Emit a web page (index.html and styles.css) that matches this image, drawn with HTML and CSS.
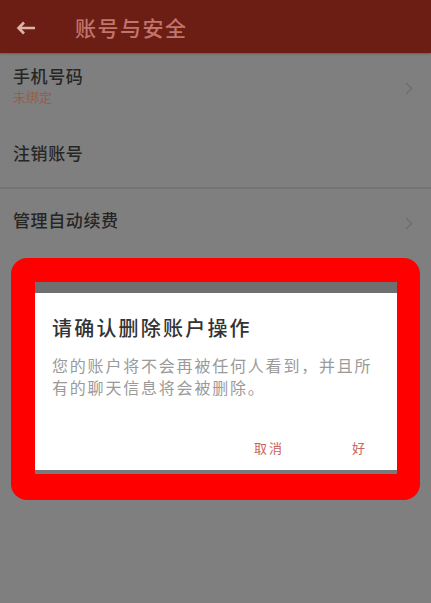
FILE: index.html
```html
<!DOCTYPE html>
<html lang="zh-CN">
<head>
    <meta charset="UTF-8">
    <meta name="viewport" content="width=device-width, initial-scale=1.0">
    <title>账号与安全</title>
    <link rel="stylesheet" href="styles.css">
</head>
<body>
    <div class="screen">
        <div class="topbar">
            <svg class="back" width="20" height="14" viewBox="0 0 20 14">
                <path d="M19 7H3M8 1.5L2.5 7 8 12.5" fill="none" stroke="#dcb2aa" stroke-width="2.6"/>
            </svg>
            <span class="topbar-title">账号与安全</span>
        </div>

        <div class="list">
            <div class="row row-phone">
                <div class="row-text">
                    <div class="row-label">手机号码</div>
                    <div class="row-sub">未绑定</div>
                </div>
                <svg class="chev" width="8" height="13" viewBox="0 0 8 13">
                    <path d="M1 1l5.5 5.5L1 12" fill="none" stroke="#6c6c6c" stroke-width="1.4"/>
                </svg>
            </div>
            <div class="row row-cancel">
                <div class="row-label">注销账号</div>
            </div>
            <div class="row row-renew">
                <div class="row-label">管理自动续费</div>
                <svg class="chev" width="8" height="13" viewBox="0 0 8 13">
                    <path d="M1 1l5.5 5.5L1 12" fill="none" stroke="#6c6c6c" stroke-width="1.4"/>
                </svg>
            </div>
        </div>

        <!-- 确认弹窗 + 红色标注框 -->
        <div class="mark">
            <div class="dialog">
                <div class="dialog-title">请确认删除账户操作</div>
                <div class="dialog-text">您的账户将不会再被任何人看到，并且所有的聊天信息将会被删除。</div>
                <div class="dialog-actions">
                    <span class="action">取消</span>
                    <span class="action">好</span>
                </div>
            </div>
        </div>
    </div>
</body>
</html>
```

FILE: styles.css
```css
html, body {
    margin: 0;
    padding: 0;
}

body {
    font-family: "Noto Sans CJK SC", "Noto Sans", sans-serif;
    background: #7f7f7f;
}

.screen {
    position: relative;
    width: 431px;
    height: 603px;
    overflow: hidden;
    background: #7f7f7f;
}

.topbar {
    height: 53px;
    background: #6d1e14;
    display: flex;
    align-items: center;
    box-shadow: 0 1px 2px rgba(0,0,0,0.25);
}

.back {
    margin-left: 16px;
    margin-top: 2px;
}

.topbar-title {
    margin-left: 39px;
    font-size: 21px;
    font-weight: 500;
    letter-spacing: 1.5px;
    color: #c0756d;
}

.row {
    display: flex;
    align-items: center;
    justify-content: space-between;
    padding: 0 18px 0 13px;
}

.row-phone {
    height: 65px;
}

.row-cancel {
    height: 69px;
    border-bottom: 2px solid #747474;
}

.row-renew {
    height: 62px;
}

.row-label {
    font-size: 17px;
    line-height: 22px;
    letter-spacing: 0.6px;
    font-weight: 500;
    color: #262626;
}

.row-sub {
    font-size: 13px;
    line-height: 18px;
    margin-top: 1px;
    color: #9e5a48;
}

.chev {
    margin-top: 6px;
}

.mark {
    position: absolute;
    left: 11px;
    top: 258px;
    width: 362px;
    padding: 24px 23px 26px 24px;
    background: #ff0000;
    border-radius: 16px;
}

.dialog {
    background: #ffffff;
    border-top: 11px solid #6f6f6f;
    border-bottom: 4px solid #7a7a7a;
    padding: 21px 14px 13px 17px;
}

.dialog-title {
    font-size: 20px;
    line-height: 28px;
    letter-spacing: 2.2px;
    font-weight: 500;
    color: #333333;
}

.dialog-text {
    margin-top: 12px;
    font-size: 16px;
    line-height: 22px;
    letter-spacing: 1.8px;
    color: #9a9a9a;
}

.dialog-actions {
    display: flex;
    justify-content: flex-end;
    gap: 68px;
    margin-top: 41px;
    padding-right: 16px;
}

.action {
    font-size: 13px;
    line-height: 18px;
    letter-spacing: 2px;
    color: #c8655e;
}
```
